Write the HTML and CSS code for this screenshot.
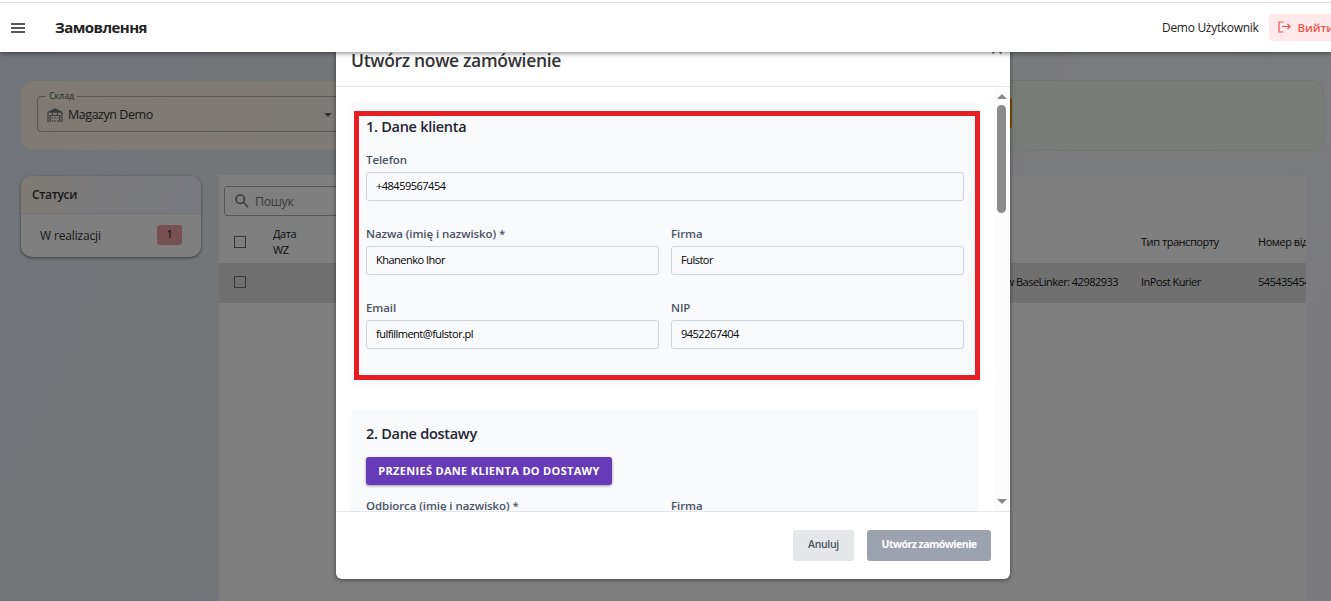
FILE: index.html
```html
<!DOCTYPE html>
<html lang="uk">
  <head>
    <meta charset="UTF-8" />
    <meta name="viewport" content="width=device-width, initial-scale=1.0" />
    <title>Замовлення</title>
    <link rel="stylesheet" href="styles.css">
  </head>
  <body>
    <header class="navbar">
      <svg class="menu-icon" width="14" height="10" viewBox="0 0 14 10">
        <path d="M0 1h14M0 5h14M0 9h14" stroke="#222" stroke-width="1.5" />
      </svg>
      <h1 class="page-title">Замовлення</h1>
      <div class="user">
        <span class="user-name">Demo Użytkownik</span>
        <button class="logout">
          <svg width="13" height="12" viewBox="0 0 13 12" fill="none" stroke="#ef5350" stroke-width="1.2">
            <path d="M5.500 1H1v10h4.500M4 5.500h8M9.500 3l2.500 2.500L9.500 8" />
          </svg>
          <span>Вийти</span>
        </button>
      </div>
    </header>

    <main class="page">
      <section class="warehouse">
        <div class="select">
          <span class="select-label">Склад</span>
          <svg width="16" height="14" viewBox="0 0 16 14" fill="none" stroke="#777" stroke-width="1.2">
            <path d="M1 4.200L8 .8l7 3.400z" fill="#777" />
            <path d="M1 14V4M15 14V4M2 7.500h12M5.500 5v2.500M10.500 5v2.500M3.200 14V7.500M12.800 14V7.500" />
            <path d="M4.800 10h6.800M4.800 12.800h6.800" stroke-dasharray="1.500 1.100" />
          </svg>
          <span class="select-value">Magazyn Demo</span>
          <i class="caret"></i>
        </div>
        <button class="add-btn"></button>
      </section>

      <div class="content">
        <aside class="statuses">
          <h2>Статуси</h2>
          <div class="status">
            <span>W realizacji</span>
            <b class="badge">1</b>
          </div>
        </aside>

        <div class="orders">
          <div class="search">
            <svg width="14" height="14" viewBox="0 0 14 14" fill="none" stroke="#777" stroke-width="1.6">
              <circle cx="5.200" cy="5.200" r="4.200" />
              <path d="M8.500 8.500l4.700 4.700" />
            </svg>
            <span>Пошук</span>
          </div>
          <div class="row row-head">
            <i class="checkbox"></i>
            <span class="date">Дата<br />WZ</span>
            <span></span>
            <span class="transport">Тип транспорту</span>
            <span class="number">Номер відправлення</span>
          </div>
          <div class="row row-item">
            <i class="checkbox"></i>
            <span></span>
            <span class="note">w BaseLinker: 42982933</span>
            <span>InPost Kurier</span>
            <span>545435454</span>
          </div>
        </div>
      </div>
    </main>

    <div class="overlay">
      <div class="modal">
        <div class="modal-header">
          <h2>Utwórz nowe zamówienie</h2>
          <svg class="close" width="10" height="10" viewBox="0 0 10 10">
            <path d="M.5.5l9 9M9.500.5l-9 9" stroke="#555" stroke-width="1.5" />
          </svg>
        </div>

        <div class="modal-body">
          <div class="form">
            <section class="form-section">
              <h3>1. Dane klienta</h3>
              <div class="fields">
                <label class="field wide"><span>Telefon</span>
                  <input value="+48459567454" /></label>
                <label class="field"><span>Nazwa (imię i nazwisko) *</span>
                  <input value="Khanenko Ihor" /></label>
                <label class="field"><span>Firma</span>
                  <input value="Fulstor" /></label>
                <label class="field"><span>Email</span>
                  <input value="fulfillment@fulstor.pl" /></label>
                <label class="field"><span>NIP</span>
                  <input value="9452267404" /></label>
              </div>
              <div class="highlight"></div>
            </section>

            <section class="form-section">
              <h3>2. Dane dostawy</h3>
              <button class="copy-btn">PRZENIEŚ DANE KLIENTA DO DOSTAWY</button>
              <div class="fields">
                <label class="field"><span>Odbiorca (imię i nazwisko) *</span>
                  <input /></label>
                <label class="field"><span>Firma</span>
                  <input /></label>
              </div>
            </section>
          </div>
          <div class="scrollbar">
            <i class="arrow-up"></i>
            <i class="thumb"></i>
            <i class="arrow-down"></i>
          </div>
        </div>

        <div class="modal-footer">
          <button class="cancel">Anuluj</button>
          <button class="submit">Utwórz zamówienie</button>
        </div>
      </div>
    </div>
  </body>
</html>
```

FILE: styles.css
```css
* {
  box-sizing: border-box;
}
body {
  margin: 0;
  height: 601px;
  overflow: hidden;
  position: relative;
  font-family: "Open Sans", "Noto Sans", sans-serif;
  font-size: 12px;
  color: #111;
  background: linear-gradient(115deg, #e1e8f1 0%, #e5edf3 20%, #e6ebf3 35%, #f7f8fc 70%, #f6f7fb 100%);
}
h1, h2, h3 {
  margin: 0;
  font-weight: 600;
}
button, input {
  font-family: inherit;
  border: none;
  padding: 0;
}

/* top bar */
.navbar {
  position: relative;
  z-index: 10;
  display: flex;
  align-items: center;
  height: 52px;
  padding: 3px 0 0 11px;
  background: #fff;
  box-shadow: 0 1px 5px rgba(0, 0, 0, 0.5);
  overflow: hidden;
  clip-path: inset(0 0 -10px 0);
}
.navbar::before {
  content: "";
  position: absolute;
  top: 2px;
  left: 0;
  right: 0;
  height: 1px;
  background: #ddd;
}
.page-title {
  margin-left: 30px;
  padding-bottom: 2px;
  font-size: 15px;
  font-weight: 700;
  letter-spacing: -0.55px;
  color: #222;
}
.user {
  display: flex;
  align-items: center;
  gap: 10px;
  width: 169px;
  margin-left: auto;
  white-space: nowrap;
}
.user-name {
  width: 97px;
  font-size: 12px;
  letter-spacing: -0.3px;
  color: #222;
}
.logout {
  display: flex;
  align-items: center;
  gap: 7px;
  flex: none;
  width: 80px;
  height: 27px;
  padding: 0 0 1px 9px;
  border-radius: 4px;
  background: #ffe9ea;
  color: #ef5350;
  font-size: 11.5px;
  font-weight: 600;
  letter-spacing: -0.1px;
}

/* page */
.page {
  padding: 28px 7px 0 21px;
}
.warehouse {
  position: relative;
  height: 71px;
  padding: 15px;
  border: 1px solid #e4ece2;
  border-left-color: #fdf3e8;
  border-radius: 14px;
  background: linear-gradient(115deg, #fff3e6 0%, #fdf5ed 25%, #eef6f4 65%, #f0fbf0 85%);
}
.select {
  position: relative;
  display: flex;
  align-items: center;
  width: 308px;
  height: 36px;
  padding: 1px 12px 0 9px;
  border: 1px solid #aaa;
  border-radius: 4px;
}
.select-label {
  position: absolute;
  top: -8px;
  left: 8px;
  padding: 0 3px;
  background: #fff4e9;
  font-size: 9px;
  letter-spacing: -0.1px;
  line-height: 14px;
  color: #555;
}
.select-value {
  margin-left: 5px;
  padding-bottom: 1px;
  font-size: 12.5px;
  letter-spacing: -0.45px;
  color: #333;
}
.caret {
  margin-left: auto;
  border: 4px solid transparent;
  border-top-color: #666;
  border-bottom: none;
}
.add-btn {
  position: absolute;
  left: 870px;
  top: 16px;
  width: 120px;
  height: 32px;
  border-radius: 4px;
  background: #ff9800;
}
.content {
  display: flex;
  gap: 18px;
  margin-top: 24px;
}
.statuses {
  width: 180px;
  height: 81px;
  margin-top: 1px;
  border-radius: 11px;
  overflow: hidden;
  background: #fff;
  box-shadow: 0 1px 3px rgba(0, 0, 0, 0.5);
}
.statuses h2 {
  height: 38px;
  padding-left: 11px;
  border-bottom: 1px solid #e0e3e8;
  background: linear-gradient(115deg, #fff4e6 0%, #f5f5fb 50%, #f0f2ff 100%);
  font-size: 12px;
  letter-spacing: -0.35px;
  line-height: 38px;
  color: #333;
}
.status {
  display: flex;
  align-items: center;
  justify-content: space-between;
  height: 42px;
  padding: 0 19px;
  letter-spacing: -0.15px;
  color: #333;
}
.badge {
  width: 25px;
  height: 20px;
  border-radius: 3px;
  background: #eda0a4;
  font-size: 10px;
  font-weight: 600;
  line-height: 19px;
  text-align: center;
}
.orders {
  width: 1087px;
  height: 440px;
  padding-top: 11px;
  overflow: hidden;
  background: #fff;
}
.search {
  display: flex;
  align-items: center;
  gap: 6px;
  width: 240px;
  height: 30px;
  margin-left: 5px;
  padding-left: 10px;
  border: 1px solid #aaa;
  border-radius: 3px;
  font-size: 12.5px;
  letter-spacing: -0.4px;
  color: #777;
}
.row {
  display: grid;
  grid-template-columns: 39px 730px 138px 117px 150px;
  align-items: center;
  padding-left: 15px;
  font-size: 11px;
  letter-spacing: -0.45px;
  white-space: nowrap;
}
.row-head {
  height: 47px;
  padding-top: 4px;
  line-height: 16px;
}
.row-item {
  height: 40px;
  padding-bottom: 3px;
  background: #e0e0e0;
  letter-spacing: -0.52px;
}
.note {
  justify-self: end;
  margin-right: 23px;
}
.checkbox {
  width: 12px;
  height: 12px;
  border: 1.5px solid #666;
}

/* modal */
.overlay {
  position: absolute;
  inset: 0;
  z-index: 5;
  display: flex;
  padding: 33px 0 0 335.500px;
  background: rgba(0, 0, 0, 0.5);
}
.modal {
  display: flex;
  flex-direction: column;
  width: 674px;
  height: 546px;
  border-radius: 6px;
  background: #fff;
  box-shadow: 0 1px 4px rgba(0, 0, 0, 0.5);
  overflow: hidden;
}
.modal-header {
  display: flex;
  align-items: center;
  justify-content: space-between;
  height: 54px;
  padding: 0 8px 0 15.500px;
  border-bottom: 1px solid #e5e7eb;
}
.modal-header h2 {
  padding-top: 1px;
  font-size: 17.5px;
  letter-spacing: -0.33px;
  color: #333;
}
.close {
  margin-bottom: 22px;
}
.modal-body {
  display: flex;
  height: 424px;
}
.form {
  display: flex;
  flex-direction: column;
  gap: 24px;
  width: 658.500px;
  padding: 15px 15px 0 15.500px;
  overflow: hidden;
}
.form-section {
  position: relative;
  flex: none;
  padding: 15px 15px 12px;
  border-radius: 4px;
  background: #f9fafc;
}
.form-section h3 {
  font-size: 14.5px;
  letter-spacing: -0.28px;
  line-height: 20px;
  color: #1f2430;
}
.fields {
  display: grid;
  grid-template-columns: 1fr 1fr;
  column-gap: 12px;
  margin-top: 14px;
}
.field {
  display: flex;
  flex-direction: column;
  gap: 3px;
  margin-bottom: 24px;
  font-size: 11.5px;
  font-weight: 600;
  letter-spacing: -0.08px;
  line-height: 18px;
  color: #4b5361;
}
.wide {
  grid-column: 1 / 3;
}
.field input {
  width: 100%;
  height: 29px;
  padding: 0 9px 2px;
  border: 1px solid #cfd3da;
  border-radius: 3px;
  background: transparent;
  font-size: 11px;
  letter-spacing: -0.5px;
  color: #000;
}
.highlight {
  position: absolute;
  top: 9px;
  left: 3px;
  width: 626px;
  height: 269px;
  border: 5px solid #e81e25;
}
.copy-btn {
  display: block;
  width: 246px;
  height: 28px;
  margin-top: 13px;
  padding-bottom: 1px;
  border-radius: 3px;
  background: #673ab7;
  box-shadow: 0 1px 3px rgba(0, 0, 0, 0.4);
  color: #fff;
  font-size: 11px;
  font-weight: 700;
  letter-spacing: 0.32px;
  white-space: nowrap;
}
.copy-btn + .fields {
  margin-top: 12px;
}
.scrollbar {
  display: flex;
  flex-direction: column;
  align-items: center;
  width: 15.500px;
  padding: 7px 0;
  background: #fcfcfc;
}
.arrow-up, .arrow-down {
  border: 5px solid transparent;
}
.arrow-up {
  border-bottom-color: #8b8b8b;
  border-top: none;
}
.arrow-down {
  margin-top: auto;
  border-top-color: #8b8b8b;
  border-bottom: none;
}
.thumb {
  width: 9px;
  height: 108px;
  margin-top: 6px;
  border-radius: 5px;
  background: #8b8b8b;
}
.modal-footer {
  display: flex;
  align-items: center;
  justify-content: flex-end;
  gap: 13px;
  height: 68px;
  padding: 0 18.500px 1px 0;
  border-top: 1px solid #e5e7eb;
}
.modal-footer button {
  height: 31px;
  padding-bottom: 3px;
  border-radius: 3px;
  font-size: 10.5px;
  font-weight: 600;
  letter-spacing: -0.3px;
}
.modal-footer .cancel {
  width: 61px;
  background: #e5e7eb;
  color: #4b5361;
}
.modal-footer .submit {
  width: 124px;
  background: #9ca3af;
  color: #fff;
  font-weight: 700;
  letter-spacing: -0.5px;
}
```
